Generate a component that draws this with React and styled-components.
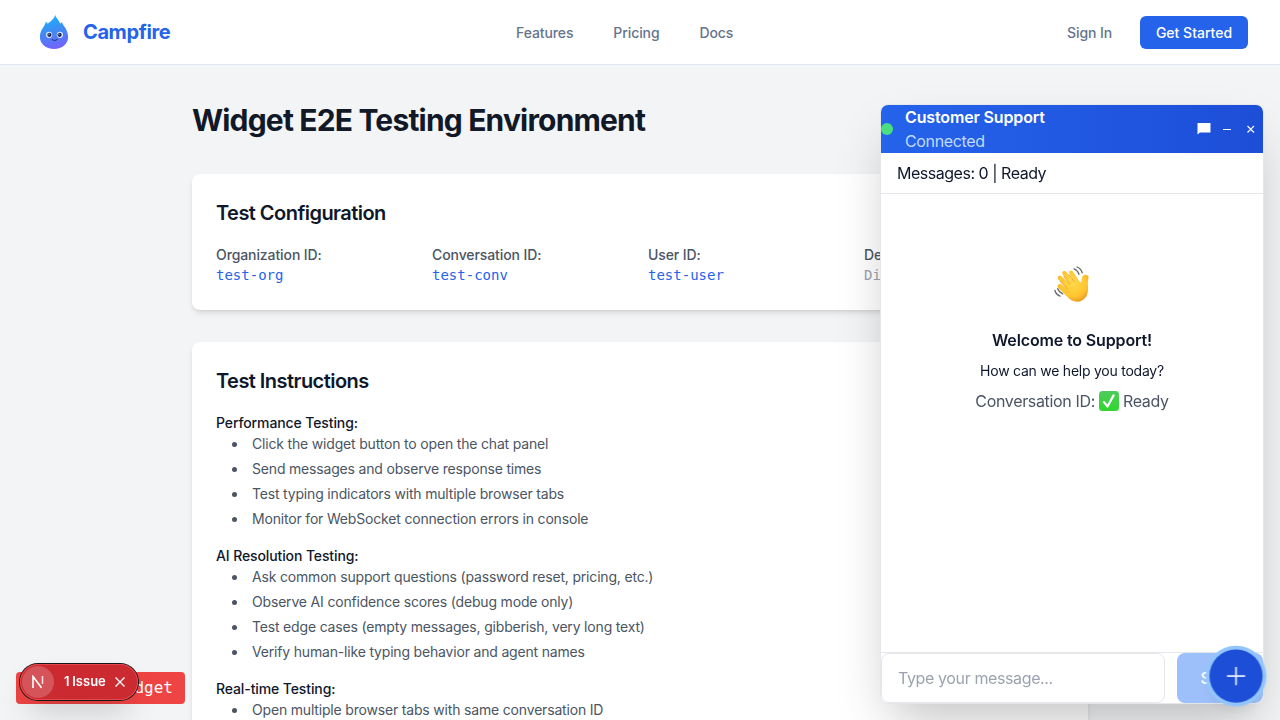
import React from "react";
import styled, { createGlobalStyle } from "styled-components";

const GlobalStyle = createGlobalStyle`
  *, *::before, *::after { box-sizing: border-box; }
  html, body { margin: 0; padding: 0; height: 720px; overflow: hidden; }
  body {
    background: #f3f4f6;
    color: #0f172a;
    font-family: Inter, "Liberation Sans", sans-serif;
    font-size: 16px;
    line-height: 1.5;
    -webkit-font-smoothing: antialiased;
  }
  h1, h2, h3, p, ul { margin: 0; padding: 0; }
  button, input { font: inherit; border: 0; }
`;

const Page = styled.div`
  height: 720px;
  overflow: hidden;
`;

const Header = styled.header`
  height: 65px;
  padding: 0 32px 0 36px;
  display: grid;
  grid-template-columns: 480px auto 1fr;
  align-items: center;
  background: #fff;
  border-bottom: 1px solid #e2e8f0;
`;

const Brand = styled.a`
  display: flex;
  align-items: center;
  gap: 11px;
  color: #2563eb;
  font-size: 20px;
  font-weight: 700;
  letter-spacing: -0.4px;
`;

const Nav = styled.nav`
  display: flex;
  gap: 40px;
`;

const NavLink = styled.a`
  color: #64748b;
  font-size: 14px;
  font-weight: 500;
  letter-spacing: -0.1px;
`;

const Actions = styled.div`
  display: flex;
  justify-content: flex-end;
  align-items: center;
  gap: 28px;
`;

const StartButton = styled.button`
  height: 33px;
  width: 108px;
  padding: 0;
  border-radius: 6px;
  background: #2563eb;
  color: #fff;
  font-size: 14px;
  font-weight: 500;
`;

const Main = styled.main`
  width: 896px;
  margin: 0 auto;
  padding-top: 33px;
`;

const PageTitle = styled.h1`
  margin-bottom: 31px;
  color: #111827;
  font-size: 30px;
  line-height: 45px;
  font-weight: 700;
  letter-spacing: -0.82px;
`;

const Card = styled.section`
  margin-bottom: 32px;
  padding: 24px;
  border-radius: 8px;
  background: #fff;
  box-shadow: 0 4px 6px -1px rgba(0, 0, 0, 0.1), 0 2px 4px -2px rgba(0, 0, 0, 0.1);
`;

const CardTitle = styled.h2`
  margin-bottom: 16px;
  font-size: 20px;
  line-height: 30px;
  font-weight: 600;
  letter-spacing: -0.54px;
`;

const ConfigGrid = styled.div`
  display: grid;
  grid-template-columns: repeat(4, 1fr);
  gap: 16px;
  font-size: 14px;
  line-height: 21px;
`;

const ConfigLabel = styled.div`
  color: #4b5563;
  font-weight: 500;
  letter-spacing: -0.1px;
`;

const ConfigValue = styled.div`
  color: ${(p) => (p.$muted ? "#9ca3af" : "#2563eb")};
  font-family: "DejaVu Sans Mono", monospace;
`;

const Group = styled.div`
  margin-bottom: 16px;
  font-size: 14px;
  line-height: 21px;
`;

const GroupTitle = styled.h3`
  font-size: 14px;
  font-weight: 500;
  letter-spacing: -0.11px;
`;

const List = styled.ul`
  margin-left: 16px;
  list-style: disc inside;
  color: #4b5563;
  letter-spacing: -0.18px;
  li + li { margin-top: 4px; }
`;

const Widget = styled.aside`
  position: fixed;
  right: 16px;
  bottom: 16px;
  width: 384px;
  height: 600px;
  display: flex;
  flex-direction: column;
  overflow: hidden;
  background: #fff;
  border: 1px solid #e5e7eb;
  border-radius: 8px;
  box-shadow: 0 25px 50px -12px rgba(0, 0, 0, 0.25);
`;

const WidgetHeader = styled.div`
  flex: none;
  height: 48px;
  display: flex;
  align-items: center;
  gap: 12px;
  padding-right: 6px;
  background: linear-gradient(to right, #2563eb, #1d4ed8);
  color: #fff;
`;

const StatusDot = styled.span`
  width: 12px;
  height: 12px;
  border-radius: 50%;
  background: #4ade80;
`;

const WidgetName = styled.div`
  flex: 1;
  font-weight: 600;
  letter-spacing: -0.14px;
`;

const WidgetStatus = styled.div`
  color: #bfdbfe;
  font-weight: 400;
  letter-spacing: -0.34px;
`;

const HeaderIcons = styled.div`
  display: flex;
  align-items: center;
  gap: 12px;
  svg:first-child { margin-right: -2px; }
`;

const StatusBar = styled.div`
  flex: none;
  padding: 8px 16px;
  border-bottom: 1px solid #e5e7eb;
  letter-spacing: -0.48px;
`;

const Welcome = styled.div`
  flex: 1;
  display: flex;
  flex-direction: column;
  align-items: center;
  padding-top: 71px;
`;

const WelcomeTitle = styled.h3`
  margin-top: 23px;
  font-size: 16px;
  font-weight: 600;
  letter-spacing: -0.14px;
`;

const WelcomeText = styled.p`
  margin-top: 8px;
  font-size: 14px;
  line-height: 21px;
  letter-spacing: -0.24px;
`;

const WelcomeState = styled.p`
  display: flex;
  align-items: center;
  gap: 4px;
  margin-top: 8px;
  color: #4b5563;
  letter-spacing: -0.34px;
`;

const Composer = styled.form`
  flex: none;
  display: flex;
  gap: 12px;
  border-top: 1px solid #e5e7eb;
`;

const MessageInput = styled.input`
  width: 284px;
  height: 50px;
  padding: 0 16px;
  border: 1px solid #e5e7eb;
  border-radius: 8px;
  background: #fff;
  letter-spacing: -0.38px;
  &::placeholder { color: #9ca3af; opacity: 1; }
`;

const SendButton = styled.button`
  flex: 1;
  border-radius: 8px;
  background: #9dc0fa;
  color: #fff;
  font-weight: 500;
`;

const Fab = styled.button`
  position: fixed;
  right: 16px;
  bottom: 16px;
  width: 56px;
  height: 56px;
  padding: 0;
  display: grid;
  place-items: center;
  border-radius: 50%;
  background: #1d4ed8;
  transform: scale(0.95);
  box-shadow: 0 0 0 4px #93c5fd, 0 10px 15px -3px rgba(0, 0, 0, 0.1), 0 4px 6px -4px rgba(0, 0, 0, 0.1);
`;

const DebugButton = styled.button`
  position: fixed;
  left: 16px;
  bottom: 16px;
  width: 169px;
  height: 32px;
  padding: 0 12px;
  border-radius: 4px;
  background: #ef4444;
  color: #fff;
  font-family: "DejaVu Sans Mono", monospace;
  text-align: right;
`;

const IssuePill = styled.div`
  position: fixed;
  left: 20px;
  top: 664px;
  width: 118px;
  height: 36px;
  display: flex;
  align-items: center;
  padding: 0 12px 0 2px;
  border-radius: 18px;
  background: #ca2a30;
  color: #fff;
  font-size: 13px;
  font-weight: 600;
  word-spacing: -0.5px;
  box-shadow: inset 0 0 0 1px #e5484d, 0 0 0 1px #171717, 0 16px 32px -8px rgba(0, 0, 0, 0.24);
`;

const PillLogo = styled.span`
  width: 32px;
  height: 32px;
  margin-right: 10px;
  display: grid;
  place-items: center;
  border-radius: 50%;
  background: rgba(255, 255, 255, 0.2);
`;

const PillLabel = styled.span`
  flex: 1;
  white-space: nowrap;
`;

const FlameLogo = () => (
  <svg width="36" height="36" viewBox="0 0 36 36">
    <defs>
      <linearGradient id="flame" x1="0.4" y1="0" x2="0.6" y2="1">
        <stop offset="0" stopColor="#18b4ff" />
        <stop offset="0.5" stopColor="#4388f2" />
        <stop offset="1" stopColor="#7462ff" />
      </linearGradient>
    </defs>
    <path fill="url(#flame)" d="M19.200.400c.2 3.300 3.800 5 4.900 9.200.8-.4 1.400-1 1.900-1.700.3 2.300 2 3.700 3.400 6 1.700 2.900 2.700 5.800 2.700 9.200 0 7-5.700 11.900-14 11.900S3.900 30.100 3.900 23.100c0-3.700 1.100-6.500 2.900-9.200 1.600-2.300 2.700-3.700 3-6.100.8.500 1.500 1.100 2 1.900C14.200 7.200 18.600 4.800 19.200.400z" />
    <circle cx="13.100" cy="20.800" r="3.100" fill="#dcecff" />
    <circle cx="23.900" cy="20.800" r="3.100" fill="#dcecff" />
    <circle cx="13.400" cy="20.800" r="2.100" fill="#172554" />
    <circle cx="23.600" cy="20.800" r="2.100" fill="#172554" />
    <circle cx="13" cy="20.100" r=".6" fill="#fff" />
    <circle cx="23" cy="20.100" r=".6" fill="#fff" />
    <path d="M16.100 25.700q2.500 2 5 0" fill="none" stroke="#1e3070" strokeWidth="1" strokeLinecap="round" />
  </svg>
);

const WavingHand = () => (
  <svg width="40" height="40" viewBox="0 0 40 40">
    <defs>
      <radialGradient id="skin" cx=".5" cy=".4" r=".62">
        <stop offset="0" stopColor="#ffd84a" />
        <stop offset=".7" stopColor="#ffc52f" />
        <stop offset="1" stopColor="#ec9a1c" />
      </radialGradient>
    </defs>
    <path fill="url(#skin)" d="M6.300 19.500c1-1.200 2.300-.8 3.400 0l5.500 4.200-8.600-9c-2.200-2.500.9-5.300 3.200-3.100l7.700 7.500-6.600-9.400c-2-2.900 1.600-5 3.600-2.500l7.200 9.300-4.300-7.900c-1.400-2.700 1.900-4.400 3.500-2l6.500 9.600c1.200 1.700 2.100 1.400 2.200-.4.100-2.200.2-4.600 2.300-5.800 1.600-.9 5.100.3 4.700 2.300-1.500 5.500-.1 9.200-.8 14.300-.7 5.700-4.700 9.800-10.200 10.200-4.300.3-7.500-2.200-10.300-5L6.800 23.500c-1.300-1.200-1.700-2.600-.5-4z" />
    <path d="M15.200 23.700L8 16.200M17.500 19.100l-5.700-7.800M22 16.500l-5-7" stroke="#dc941d" strokeWidth=".8" fill="none" strokeLinecap="round" />
    <path d="M22 3.800q3.500 1.200 5 5.500M25 2q3.900 1.300 5.200 5.800M3 25.500q1 4 5 5.700M5.700 23.700q1.300 3.600 5 5.200" stroke="#626569" strokeWidth="1.300" fill="none" strokeLinecap="round" />
  </svg>
);

const CheckBadge = () => (
  <svg width="20" height="20" viewBox="0 0 20 20">
    <defs>
      <linearGradient id="check" x1="0" y1="0" x2="0" y2="1">
        <stop offset="0" stopColor="#4fcb5c" />
        <stop offset="1" stopColor="#32d52f" />
      </linearGradient>
    </defs>
    <rect width="20" height="20" rx="3.500" fill="url(#check)" />
    <path d="M5 11.100l3.500 4.400L14.600 4.400" fill="none" stroke="#fff" strokeWidth="2.200" strokeLinecap="round" strokeLinejoin="round" />
  </svg>
);

const CONFIG = [
  ["Organization ID:", "test-org"],
  ["Conversation ID:", "test-conv"],
  ["User ID:", "test-user"],
  ["Debug Mode:", "Disabled"],
];

const GROUPS = [
  ["Performance Testing:", [
    "Click the widget button to open the chat panel",
    "Send messages and observe response times",
    "Test typing indicators with multiple browser tabs",
    "Monitor for WebSocket connection errors in console",
  ]],
  ["AI Resolution Testing:", [
    "Ask common support questions (password reset, pricing, etc.)",
    "Observe AI confidence scores (debug mode only)",
    "Test edge cases (empty messages, gibberish, very long text)",
    "Verify human-like typing behavior and agent names",
  ]],
  ["Real-time Testing:", ["Open multiple browser tabs with same conversation ID"]],
];

export default function App() {
  return (
    <Page>
      <GlobalStyle />
      <Header>
        <Brand><FlameLogo />Campfire</Brand>
        <Nav>
          <NavLink>Features</NavLink>
          <NavLink>Pricing</NavLink>
          <NavLink>Docs</NavLink>
        </Nav>
        <Actions>
          <NavLink>Sign In</NavLink>
          <StartButton>Get Started</StartButton>
        </Actions>
      </Header>
      <Main>
        <PageTitle>Widget E2E Testing Environment</PageTitle>
        <Card>
          <CardTitle>Test Configuration</CardTitle>
          <ConfigGrid>
            {CONFIG.map(([label, value]) => (
              <div key={label}>
                <ConfigLabel>{label}</ConfigLabel>
                <ConfigValue $muted={value === "Disabled"}>{value}</ConfigValue>
              </div>
            ))}
          </ConfigGrid>
        </Card>
        <Card>
          <CardTitle>Test Instructions</CardTitle>
          {GROUPS.map(([title, items]) => (
            <Group key={title}>
              <GroupTitle>{title}</GroupTitle>
              <List>{items.map((t) => <li key={t}>{t}</li>)}</List>
            </Group>
          ))}
        </Card>
      </Main>
      <Widget>
        <WidgetHeader>
          <StatusDot />
          <WidgetName>
            Customer Support
            <WidgetStatus>Connected</WidgetStatus>
          </WidgetName>
          <HeaderIcons>
            <svg width="14" height="12" viewBox="0 0 14 12"><path d="M.5 0h13v9.500H3L.5 11.500z" fill="#fff" /></svg>
            <svg width="12" height="12" viewBox="0 0 12 12"><path d="M2 6.500h8" stroke="#fff" /></svg>
            <svg width="12" height="12" viewBox="0 0 12 12"><path d="M2.500 3l6.500 6.500M9 3L2.500 9.500" stroke="#fff" strokeWidth="1.100" /></svg>
          </HeaderIcons>
        </WidgetHeader>
        <StatusBar>Messages: 0 | Ready</StatusBar>
        <Welcome>
          <WavingHand />
          <WelcomeTitle>Welcome to Support!</WelcomeTitle>
          <WelcomeText>How can we help you today?</WelcomeText>
          <WelcomeState>Conversation ID: <CheckBadge /> Ready</WelcomeState>
        </Welcome>
        <Composer>
          <MessageInput placeholder="Type your message..." />
          <SendButton type="button">Send</SendButton>
        </Composer>
      </Widget>
      <Fab aria-label="Open chat">
        <svg width="24" height="24" viewBox="0 0 24 24"><path d="M12 2.500v19M2.500 12h19" stroke="#e8effd" strokeWidth="1.800" /></svg>
      </Fab>
      <DebugButton>Widget</DebugButton>
      <IssuePill>
        <PillLogo>
          <svg width="14" height="14" viewBox="0 0 14 14" fill="none" stroke="#fff" strokeWidth="1.600">
            <path d="M2 13V1.500l8.500 11.300" /><path d="M11.500 1v8" opacity=".8" />
          </svg>
        </PillLogo>
        <PillLabel>1 Issue</PillLabel>
        <svg width="12" height="12" viewBox="0 0 12 12"><path d="M1.500 1.500l9 9M10.500 1.500l-9 9" stroke="#fff" strokeWidth="1.300" /></svg>
      </IssuePill>
    </Page>
  );
}
